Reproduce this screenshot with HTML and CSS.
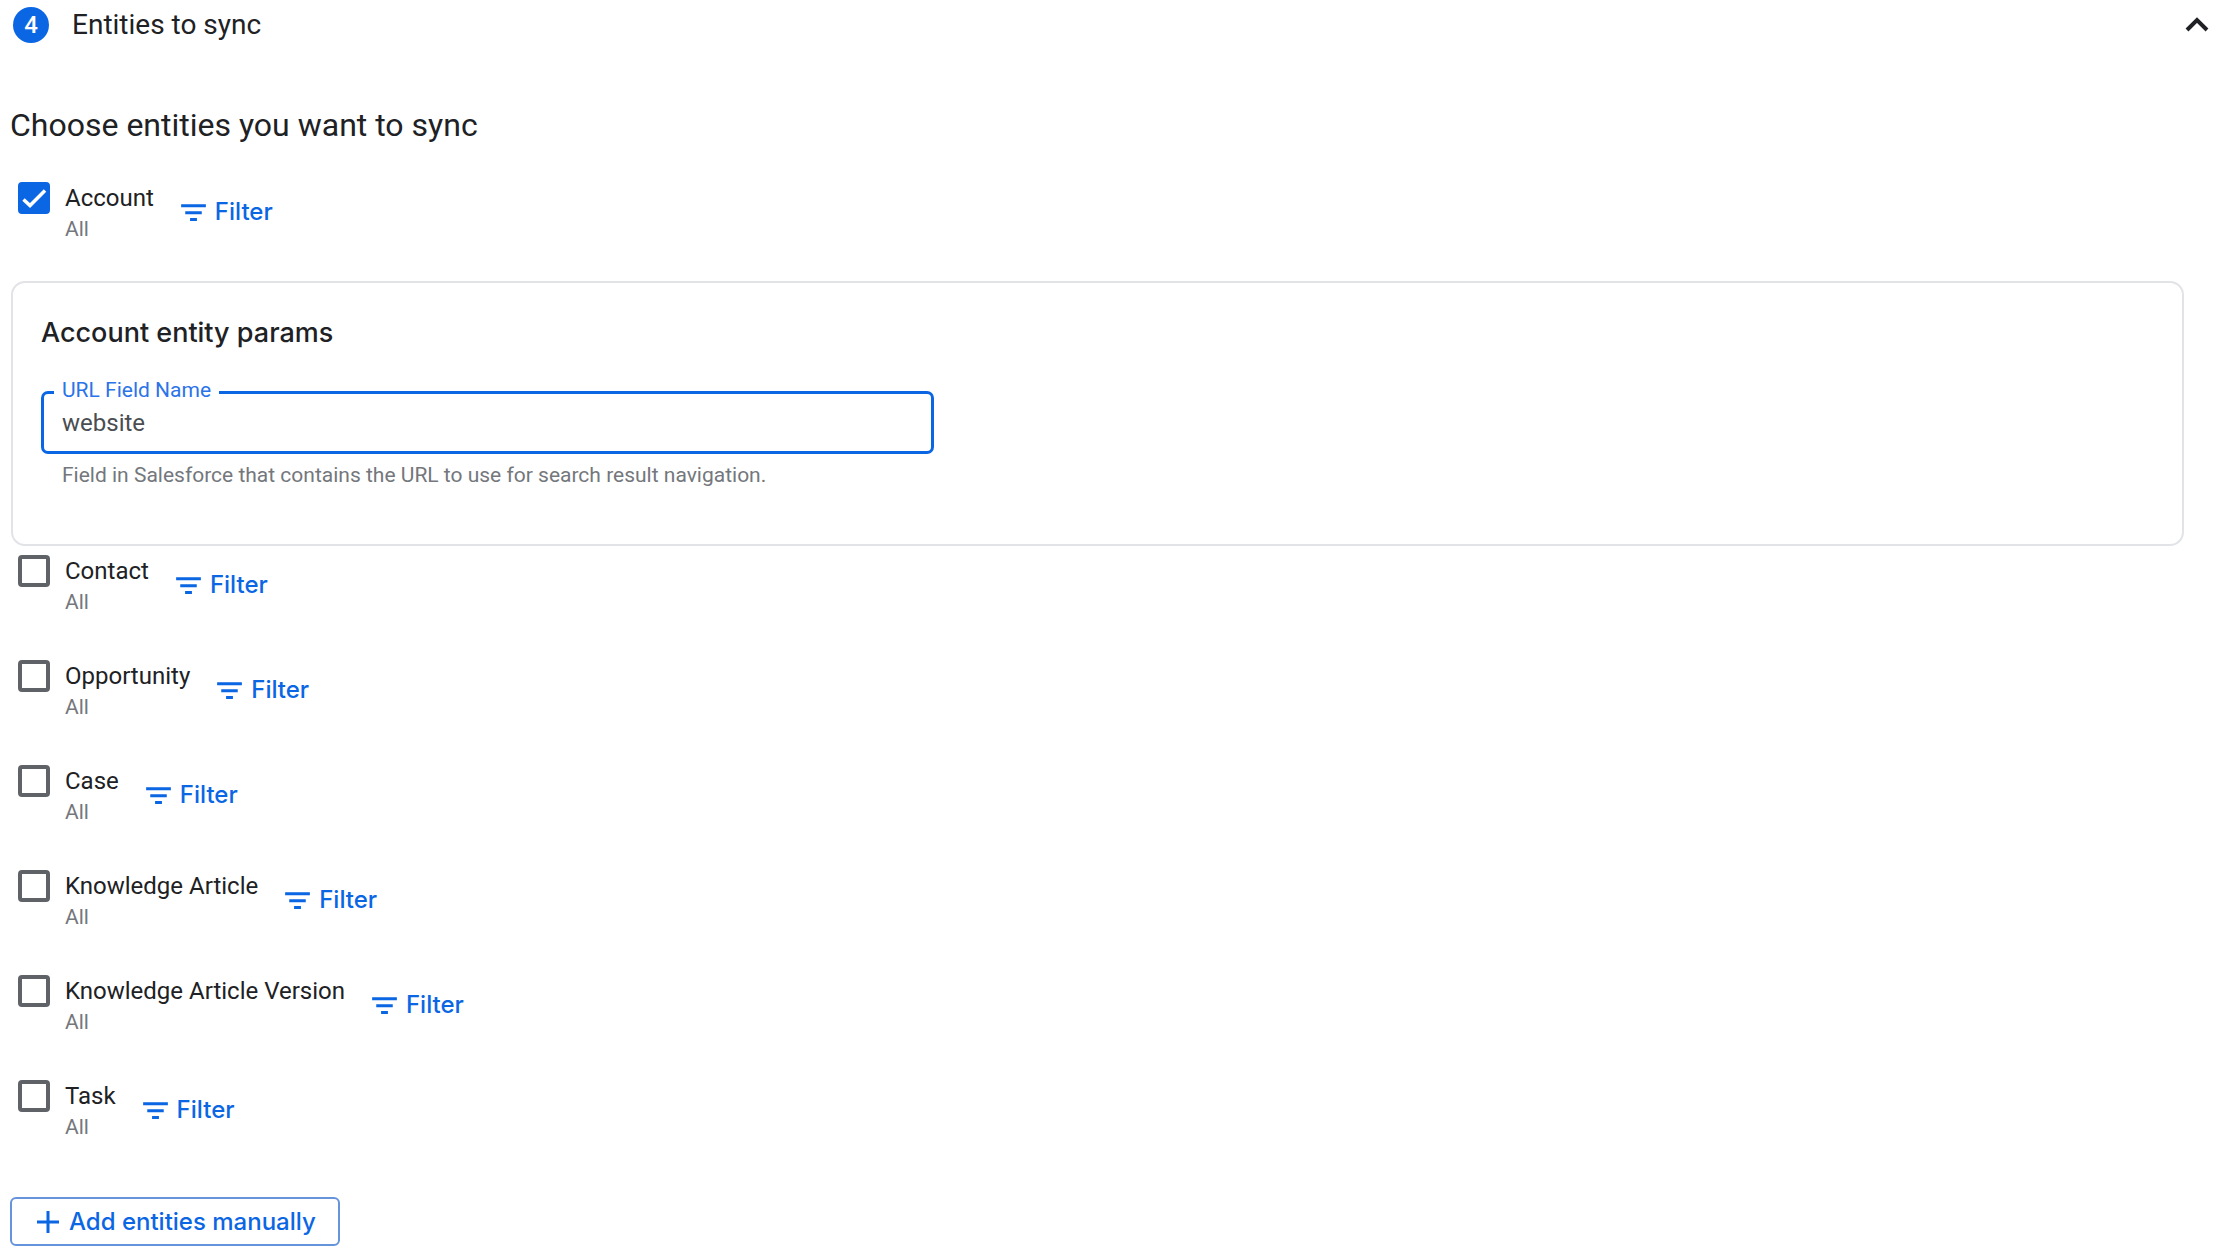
FILE: index.html
```html
<!DOCTYPE html>
<html lang="en">
<head>
  <meta charset="UTF-8">
  <meta name="viewport" content="width=device-width, initial-scale=1">
  <title>Entities to sync</title>
  <link rel="stylesheet" href="styles.css">
</head>
<body>
  <svg class="sprite" aria-hidden="true">
    <symbol id="icon-filter" viewBox="0 0 24 24">
      <path d="M3 6h18v2.200H3zM6 11h12v2.200H6zM9.500 16h5v2.200h-5z"/>
    </symbol>
    <symbol id="icon-check" viewBox="0 0 32 32">
      <path d="M5.500 17.500L12 23.500L27 8.500" fill="none" stroke="currentColor" stroke-width="3.500"/>
    </symbol>
  </svg>

  <header class="step-header">
    <span class="step-number">4</span>
    <h1 class="step-title">Entities to sync</h1>
    <button class="collapse" type="button" aria-label="Collapse step" aria-expanded="true">
      <svg viewBox="0 0 24 24"><path d="M2 17L12 7L22 17"/></svg>
    </button>
  </header>

  <main class="step-body">
    <h2 class="section-title">Choose entities you want to sync</h2>

    <div class="entity">
      <span class="checkbox">
        <input type="checkbox" id="account" checked>
        <svg><use href="#icon-check"/></svg>
      </span>
      <label class="entity-label" for="account">Account <small>All</small></label>
      <button class="filter" type="button"><svg><use href="#icon-filter"/></svg>Filter</button>
    </div>

    <section class="params">
      <h3 class="params-title">Account entity params</h3>
      <div class="field">
        <label for="url-field">URL Field Name</label>
        <input type="text" id="url-field" value="website" aria-describedby="url-hint">
      </div>
      <p class="hint" id="url-hint">Field in Salesforce that contains the URL to use for search result navigation.</p>
    </section>

    <div class="entity">
      <span class="checkbox">
        <input type="checkbox" id="contact">
        <svg><use href="#icon-check"/></svg>
      </span>
      <label class="entity-label" for="contact">Contact <small>All</small></label>
      <button class="filter" type="button"><svg><use href="#icon-filter"/></svg>Filter</button>
    </div>

    <div class="entity">
      <span class="checkbox">
        <input type="checkbox" id="opportunity">
        <svg><use href="#icon-check"/></svg>
      </span>
      <label class="entity-label" for="opportunity">Opportunity <small>All</small></label>
      <button class="filter" type="button"><svg><use href="#icon-filter"/></svg>Filter</button>
    </div>

    <div class="entity">
      <span class="checkbox">
        <input type="checkbox" id="case">
        <svg><use href="#icon-check"/></svg>
      </span>
      <label class="entity-label" for="case">Case <small>All</small></label>
      <button class="filter" type="button"><svg><use href="#icon-filter"/></svg>Filter</button>
    </div>

    <div class="entity">
      <span class="checkbox">
        <input type="checkbox" id="article">
        <svg><use href="#icon-check"/></svg>
      </span>
      <label class="entity-label" for="article">Knowledge Article <small>All</small></label>
      <button class="filter" type="button"><svg><use href="#icon-filter"/></svg>Filter</button>
    </div>

    <div class="entity">
      <span class="checkbox">
        <input type="checkbox" id="article-version">
        <svg><use href="#icon-check"/></svg>
      </span>
      <label class="entity-label" for="article-version">Knowledge Article Version <small>All</small></label>
      <button class="filter" type="button"><svg><use href="#icon-filter"/></svg>Filter</button>
    </div>

    <div class="entity">
      <span class="checkbox">
        <input type="checkbox" id="task">
        <svg><use href="#icon-check"/></svg>
      </span>
      <label class="entity-label" for="task">Task <small>All</small></label>
      <button class="filter" type="button"><svg><use href="#icon-filter"/></svg>Filter</button>
    </div>

    <button class="add" type="button">
      <svg viewBox="0 0 22 22"><path d="M11 0v22M0 11h22"/></svg>
      Add entities manually
    </button>
  </main>
</body>
</html>
```
FILE: styles.css
```css
* {
  box-sizing: border-box;
}

body {
  margin: 0;
  background: #fff;
  color: #202124;
  font-family: Roboto, "Liberation Sans", sans-serif;
  font-size: 24px;
}

h1, h2, h3, p {
  margin: 0;
}

button {
  padding: 0;
  border: none;
  background: none;
  color: #0b66e4;
  font-family: Inter, "Liberation Sans", sans-serif;
  font-size: 24px;
  font-weight: 500;
  cursor: pointer;
}

.sprite {
  display: none;
}

/* step header */
.step-header {
  display: flex;
  align-items: center;
  padding: 7px 19px 0 13px;
}

.step-number {
  width: 36px;
  height: 36px;
  border-radius: 50%;
  background: #0b66e4;
  color: #fff;
  font-weight: 500;
  line-height: 36px;
  text-align: center;
}

.step-title {
  flex: 1;
  margin-left: 23px;
  font-size: 28px;
  font-weight: 400;
  line-height: 36px;
}

.collapse {
  display: flex;
}

.collapse svg {
  width: 24px;
  height: 24px;
  fill: none;
  stroke: #202124;
  stroke-width: 4;
}

/* entity list */
.step-body {
  padding: 62px 44px 14px 10px;
}

.section-title {
  margin-bottom: 28px;
  font-size: 32px;
  font-weight: 400;
  line-height: 40px;
}

.entity {
  display: flex;
  align-items: center;
  padding: 9px 0 34px 8px;
}

.checkbox {
  display: grid;
  align-self: flex-start;
  width: 32px;
  height: 32px;
}

.checkbox input,
.checkbox svg {
  grid-area: 1 / 1;
  width: 32px;
  height: 32px;
  margin: 0;
}

.checkbox input {
  appearance: none;
  border: 4px solid #5f6368;
  border-radius: 4px;
  cursor: pointer;
}

.checkbox svg {
  visibility: hidden;
  color: #fff;
  pointer-events: none;
}

.checkbox input:checked {
  border-color: #0b66e4;
  background: #0b66e4;
}

.checkbox input:checked + svg {
  visibility: visible;
}

.entity-label {
  margin: 0 23px 0 15px;
  line-height: 32px;
}

.entity-label small {
  display: block;
  color: #74777c;
  font-size: 21px;
  line-height: 30px;
}

.filter {
  display: flex;
  align-items: center;
  gap: 5px;
  padding-bottom: 2px;
  line-height: 32px;
}

.filter svg {
  width: 33px;
  height: 33px;
  fill: currentColor;
}

/* params card */
.params {
  margin: 3px 0 0 1px;
  padding: 32px 28px 55px;
  border: 2px solid #e2e3e7;
  border-radius: 14px;
}

.params-title {
  margin-bottom: 40px;
  font-family: Inter, "Liberation Sans", sans-serif;
  font-size: 27px;
  font-weight: 500;
  line-height: 36px;
}

.field {
  position: relative;
  max-width: 893px;
}

/* label sits on the top border of the box */
.field label {
  position: absolute;
  top: -14px;
  left: 13px;
  padding: 0 8px;
  background: #fff;
  color: #2b73e8;
  font-size: 21px;
  line-height: 26px;
}

.field input {
  display: block;
  width: 100%;
  height: 63px;
  padding: 0 18px;
  border: 3px solid #0b66e4;
  border-radius: 7px;
  outline: none;
  background: #fff;
  color: #4a4d51;
  font-family: inherit;
  font-size: 24px;
}

.hint {
  margin: 7px 0 0 21px;
  color: #74777c;
  font-size: 21px;
  line-height: 28px;
}

.add {
  display: flex;
  align-items: center;
  gap: 10px;
  height: 49px;
  margin-top: 21px;
  padding: 0 22px 0 25px;
  border: 2px solid #6694dc;
  border-radius: 6px;
}

.add svg {
  width: 22px;
  height: 22px;
  stroke: currentColor;
  stroke-width: 3;
}
```
